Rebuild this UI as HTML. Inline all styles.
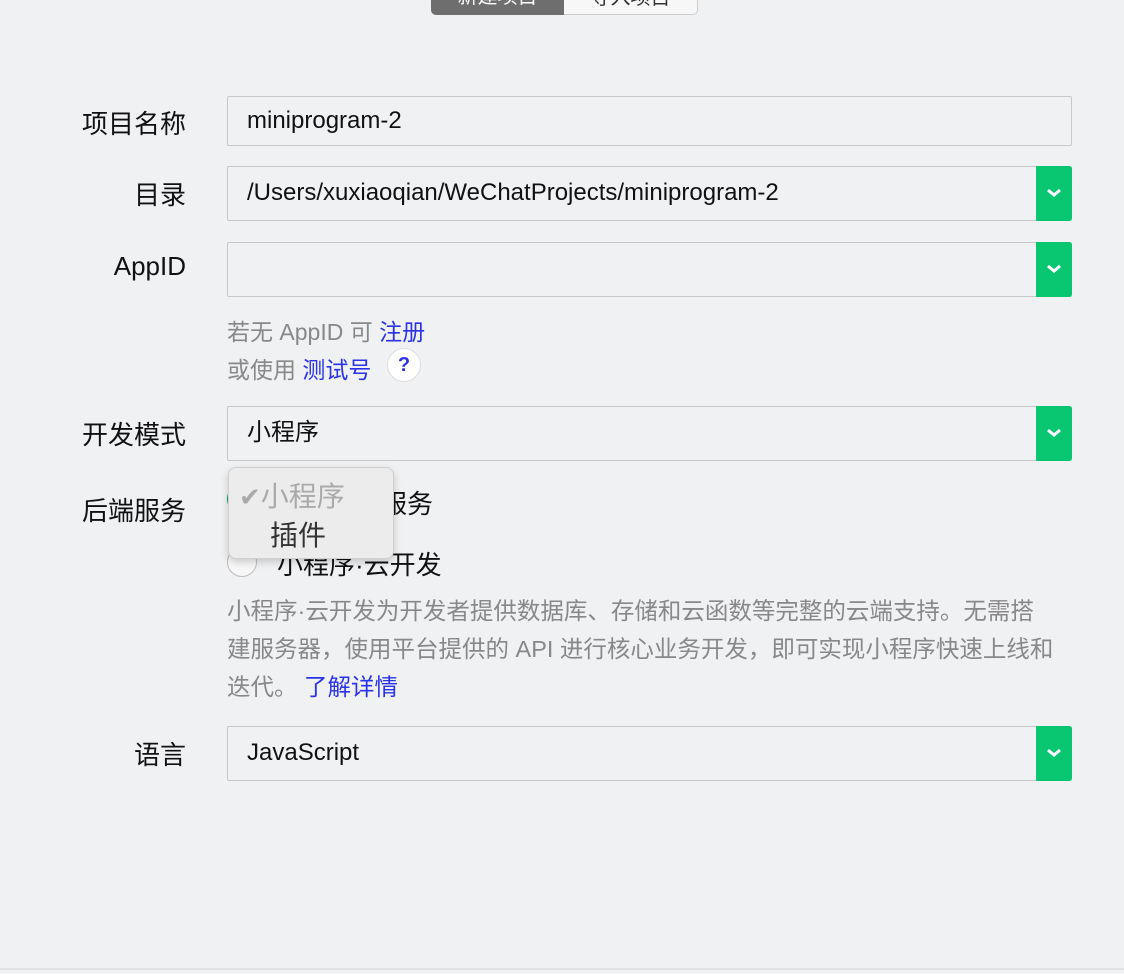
<!DOCTYPE html>
<html><head><meta charset="utf-8"><style>
body{margin:0;width:1124px;height:974px;background:#f0f1f3;font-family:"Liberation Sans","Noto Sans CJK SC",sans-serif;position:relative;overflow:hidden}
.a{position:absolute}
.lbl{position:absolute;right:938px;font-size:26px;color:#111;white-space:nowrap}
.in{position:absolute;left:227px;width:845px;height:54px;border:1px solid #c8c8c8;background:#f0f1f3;box-sizing:border-box;border-radius:2px;font-size:24px;color:#111;line-height:52px;padding-left:19px}
.g{position:absolute;right:-1px;top:-1px;width:36px;height:54px;background:#09c671;border-radius:0 3px 3px 0}
.g svg{position:absolute;left:10px;top:22px}
.help{font-size:23px;color:#888}
.blue{color:#2a33e8}
</style></head><body>
<div class="a" style="left:431px;top:-20px;width:133px;height:35px;background:#6e6e6e;border-radius:0 0 0 5px;color:#fff;font-size:20px;text-align:center;line-height:34px">新建项目</div>
<div class="a" style="left:564px;top:-20px;width:134px;height:35px;background:#f7f7f7;border:1px solid #ccc;border-left:none;border-radius:0 0 5px 0;box-sizing:border-box;color:#333;font-size:20px;text-align:center;line-height:34px">导入项目</div>

<div class="lbl" style="top:104px">项目名称</div>
<div class="in" style="top:96px;height:50px;line-height:48px">miniprogram-2</div>

<div class="lbl" style="top:175px">目录</div>
<div class="in" style="top:166px;height:55px">/Users/xuxiaoqian/WeChatProjects/miniprogram-2<div class="g" style="height:55px"><svg width="16" height="10"><path d="M2 2l6 5 6-5" stroke="#fff" stroke-width="3" fill="none"/></svg></div></div>

<div class="lbl" style="top:251px">AppID</div>
<div class="in" style="top:242px;height:55px"><div class="g" style="height:55px"><svg width="16" height="10"><path d="M2 2l6 5 6-5" stroke="#fff" stroke-width="3" fill="none"/></svg></div></div>

<div class="a help" style="left:227px;top:313px">若无 AppID 可 <span class="blue">注册</span></div>
<div class="a help" style="left:227px;top:351px">或使用 <span class="blue">测试号</span></div>
<div class="a" style="left:387px;top:348px;width:34px;height:34px;border-radius:50%;background:#fff;border:1px solid #ddd;box-sizing:border-box;text-align:center;line-height:33px;color:#2a33e8;font-weight:bold;font-size:20px">?</div>

<div class="lbl" style="top:415px">开发模式</div>
<div class="in" style="top:406px;height:55px">小程序<div class="g" style="height:55px"><svg width="16" height="10"><path d="M2 2l6 5 6-5" stroke="#fff" stroke-width="3" fill="none"/></svg></div></div>

<div class="lbl" style="top:491px">后端服务</div>
<div class="a" style="left:227px;top:484px;width:30px;height:30px;border-radius:50%;background:#09a060"></div>
<div class="a" style="left:277px;top:484px;font-size:26px;color:#111">不使用云服务</div>
<div class="a" style="left:227px;top:547px;width:30px;height:30px;border-radius:50%;border:1px solid #bbb;box-sizing:border-box;background:#f7f7f7"></div>
<div class="a" style="left:277px;top:545px;font-size:26px;color:#111">小程序·云开发</div>

<div class="a help" style="left:227px;top:592px;width:870px;line-height:38px;font-size:23.5px;white-space:nowrap">小程序·云开发为开发者提供数据库、存储和云函数等完整的云端支持。无需搭<br>建服务器，使用平台提供的 API 进行核心业务开发，即可实现小程序快速上线和<br>迭代。 <span class="blue">了解详情</span></div>

<div class="lbl" style="top:735px">语言</div>
<div class="in" style="top:726px;height:55px">JavaScript<div class="g" style="height:55px"><svg width="16" height="10"><path d="M2 2l6 5 6-5" stroke="#fff" stroke-width="3" fill="none"/></svg></div></div>

<div class="a" style="left:228px;top:467px;width:166px;height:92px;background:#ececec;border:1px solid #d0d0d0;border-radius:8px;box-sizing:border-box;box-shadow:0 3px 8px rgba(0,0,0,.18)">
<div class="a" style="left:10px;top:7px;font-size:28px;color:#aaa"><span style="font-family:'DejaVu Sans';font-size:26px">✔</span>小程序</div>
<div class="a" style="left:41px;top:46px;font-size:28px;color:#333">插件</div>
</div>

<div class="a" style="left:0;top:968px;width:1124px;height:2px;background:#e2e2e2"></div>
</body></html>
